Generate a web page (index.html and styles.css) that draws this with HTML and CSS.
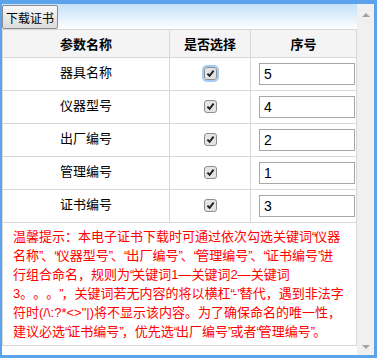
FILE: index.html
```html
<!DOCTYPE html>
<html>
<head>
  <meta charset="UTF-8">
  <title>下载证书</title>
  <link rel="stylesheet" href="styles.css">
</head>
<body>
  <div class="window">
    <div class="content">
      <div class="toolbar">
        <button class="btn">下载证书</button>
      </div>
      <table class="params">
        <colgroup>
          <col style="width: 167px;">
          <col style="width: 81px;">
          <col>
        </colgroup>
        <tr>
          <th>参数名称</th>
          <th>是否选择</th>
          <th>序号</th>
        </tr>
        <tr>
          <td class="name">器具名称</td>
          <td><span class="chk focus"><svg width="13" height="13" viewBox="0 0 13 13"><rect x="0.5" y="0.5" width="12" height="12" rx="2.5" fill="#e4e4e4" stroke="#8e8e8e"/><path d="M3.4 6.6 L5.6 8.9 L9.6 3.6" stroke="#1e1e1e" stroke-width="1.9" fill="none"/></svg></span></td>
          <td class="seq"><input type="text" value="5"></td>
        </tr>
        <tr>
          <td class="name">仪器型号</td>
          <td><span class="chk"><svg width="13" height="13" viewBox="0 0 13 13"><rect x="0.5" y="0.5" width="12" height="12" rx="2.5" fill="#e4e4e4" stroke="#8e8e8e"/><path d="M3.4 6.6 L5.6 8.9 L9.6 3.6" stroke="#1e1e1e" stroke-width="1.9" fill="none"/></svg></span></td>
          <td class="seq"><input type="text" value="4"></td>
        </tr>
        <tr>
          <td class="name">出厂编号</td>
          <td><span class="chk"><svg width="13" height="13" viewBox="0 0 13 13"><rect x="0.5" y="0.5" width="12" height="12" rx="2.5" fill="#e4e4e4" stroke="#8e8e8e"/><path d="M3.4 6.6 L5.6 8.9 L9.6 3.6" stroke="#1e1e1e" stroke-width="1.9" fill="none"/></svg></span></td>
          <td class="seq"><input type="text" value="2"></td>
        </tr>
        <tr>
          <td class="name">管理编号</td>
          <td><span class="chk"><svg width="13" height="13" viewBox="0 0 13 13"><rect x="0.5" y="0.5" width="12" height="12" rx="2.5" fill="#e4e4e4" stroke="#8e8e8e"/><path d="M3.4 6.6 L5.6 8.9 L9.6 3.6" stroke="#1e1e1e" stroke-width="1.9" fill="none"/></svg></span></td>
          <td class="seq"><input type="text" value="1"></td>
        </tr>
        <tr>
          <td class="name">证书编号</td>
          <td><span class="chk"><svg width="13" height="13" viewBox="0 0 13 13"><rect x="0.5" y="0.5" width="12" height="12" rx="2.5" fill="#e4e4e4" stroke="#8e8e8e"/><path d="M3.4 6.6 L5.6 8.9 L9.6 3.6" stroke="#1e1e1e" stroke-width="1.9" fill="none"/></svg></span></td>
          <td class="seq"><input type="text" value="3"></td>
        </tr>
        <tr>
          <td colspan="3" class="tip">温馨提示：本电子证书下载时可通过依次勾选关键词<span class="q">“</span>仪器名称<span class="q">”</span>、<span class="q">“</span>仪器型号<span class="q">”</span>、<span class="q">“</span>出厂编号<span class="q">”</span>、<span class="q">“</span>管理编号<span class="q">”</span>、<span class="q">“</span>证书编号<span class="q">”</span>进行组合命名，规则为<span class="q">“</span>关键词1—关键词2—关键词3。。。<span class="q">”</span>，关键词若无内容的将以横杠<span class="q">“</span>-<span class="q">”</span>替代，遇到非法字符时(/\:?*&lt;&gt;"|)将不显示该内容。为了确保命名的唯一性，建议必选<span class="q">“</span>证书编号<span class="q">”</span>，优先选<span class="q">“</span>出厂编号<span class="q">”</span>或者<span class="q">“</span>管理编号<span class="q">”</span>。</td>
        </tr>
      </table>
    </div>
    <div class="scrollbar">
      <span class="arrow up"></span>
      <span class="arrow down"></span>
    </div>
  </div>
</body>
</html>
```

FILE: styles.css
```css
body {
  margin: 0;
  font-family: "Liberation Sans", "Noto Sans CJK SC", sans-serif;
  font-size: 13px;
  color: #000;
}

.window {
  width: 377px;
  height: 358px;
  box-sizing: border-box;
  border-style: solid;
  border-color: #5ba3ea;
  border-width: 4px 3px 3px 2px;
  display: flex;
  background: #fff;
}

.content {
  flex: 1;
  min-width: 0;
}

.toolbar {
  height: 25px;
  box-sizing: border-box;
  padding-top: 1px;
  background: linear-gradient(#c4e0f8, #ffffff);
}

.btn {
  height: 24px;
  margin: 0;
  padding: 0 3px;
  font-family: "Liberation Sans", "Noto Sans CJK SC", sans-serif;
  font-size: 12px;
  color: #000;
  border: 1px solid #8c8c8c;
  border-radius: 2px;
  background: linear-gradient(#f7f7f7, #dddddd);
}

.params {
  width: 100%;
  border-collapse: collapse;
  table-layout: fixed;
}

.params th,
.params td {
  border: 1px solid #d8d8d8;
  padding: 0;
  text-align: center;
}

.params th {
  height: 27px;
  background: #f4f4f4;
  font-weight: bold;
  font-size: 13px;
}

.params td {
  height: 32px;
}

.params td.name {
  height: 26px;
  padding-bottom: 6px;
}

.chk {
  display: inline-block;
  width: 13px;
  height: 13px;
  vertical-align: middle;
  border-radius: 3px;
  margin-bottom: 2px;
}

.chk svg {
  display: block;
}

.chk.focus {
  box-shadow: 0 0 0 2px #a6cbf4;
}

.params td.seq {
  text-align: left;
  padding-left: 8px;
}

.seq input {
  width: 96px;
  height: 22px;
  box-sizing: border-box;
  margin: 0;
  padding: 0 4px;
  border: 1px solid #a7a7a7;
  font-family: "Liberation Sans", sans-serif;
  font-size: 14px;
  color: #000;
  vertical-align: middle;
}

.params td.tip {
  height: auto;
  padding: 4px 11px 4px 10px;
  text-align: left;
  color: #ff0000;
  line-height: 19px;
  text-spacing-trim: space-all;
}

.tip .q {
  letter-spacing: -2px;
}

.scrollbar {
  width: 17px;
  background: #f0f0f0;
  display: flex;
  flex-direction: column;
  justify-content: space-between;
  align-items: center;
  padding: 9px 0 6px;
  box-sizing: border-box;
}

.arrow {
  width: 0;
  height: 0;
  border-left: 4px solid transparent;
  border-right: 4px solid transparent;
}

.arrow.up {
  border-bottom: 4px solid #a2a2a2;
}

.arrow.down {
  border-top: 4px solid #a2a2a2;
}
```
